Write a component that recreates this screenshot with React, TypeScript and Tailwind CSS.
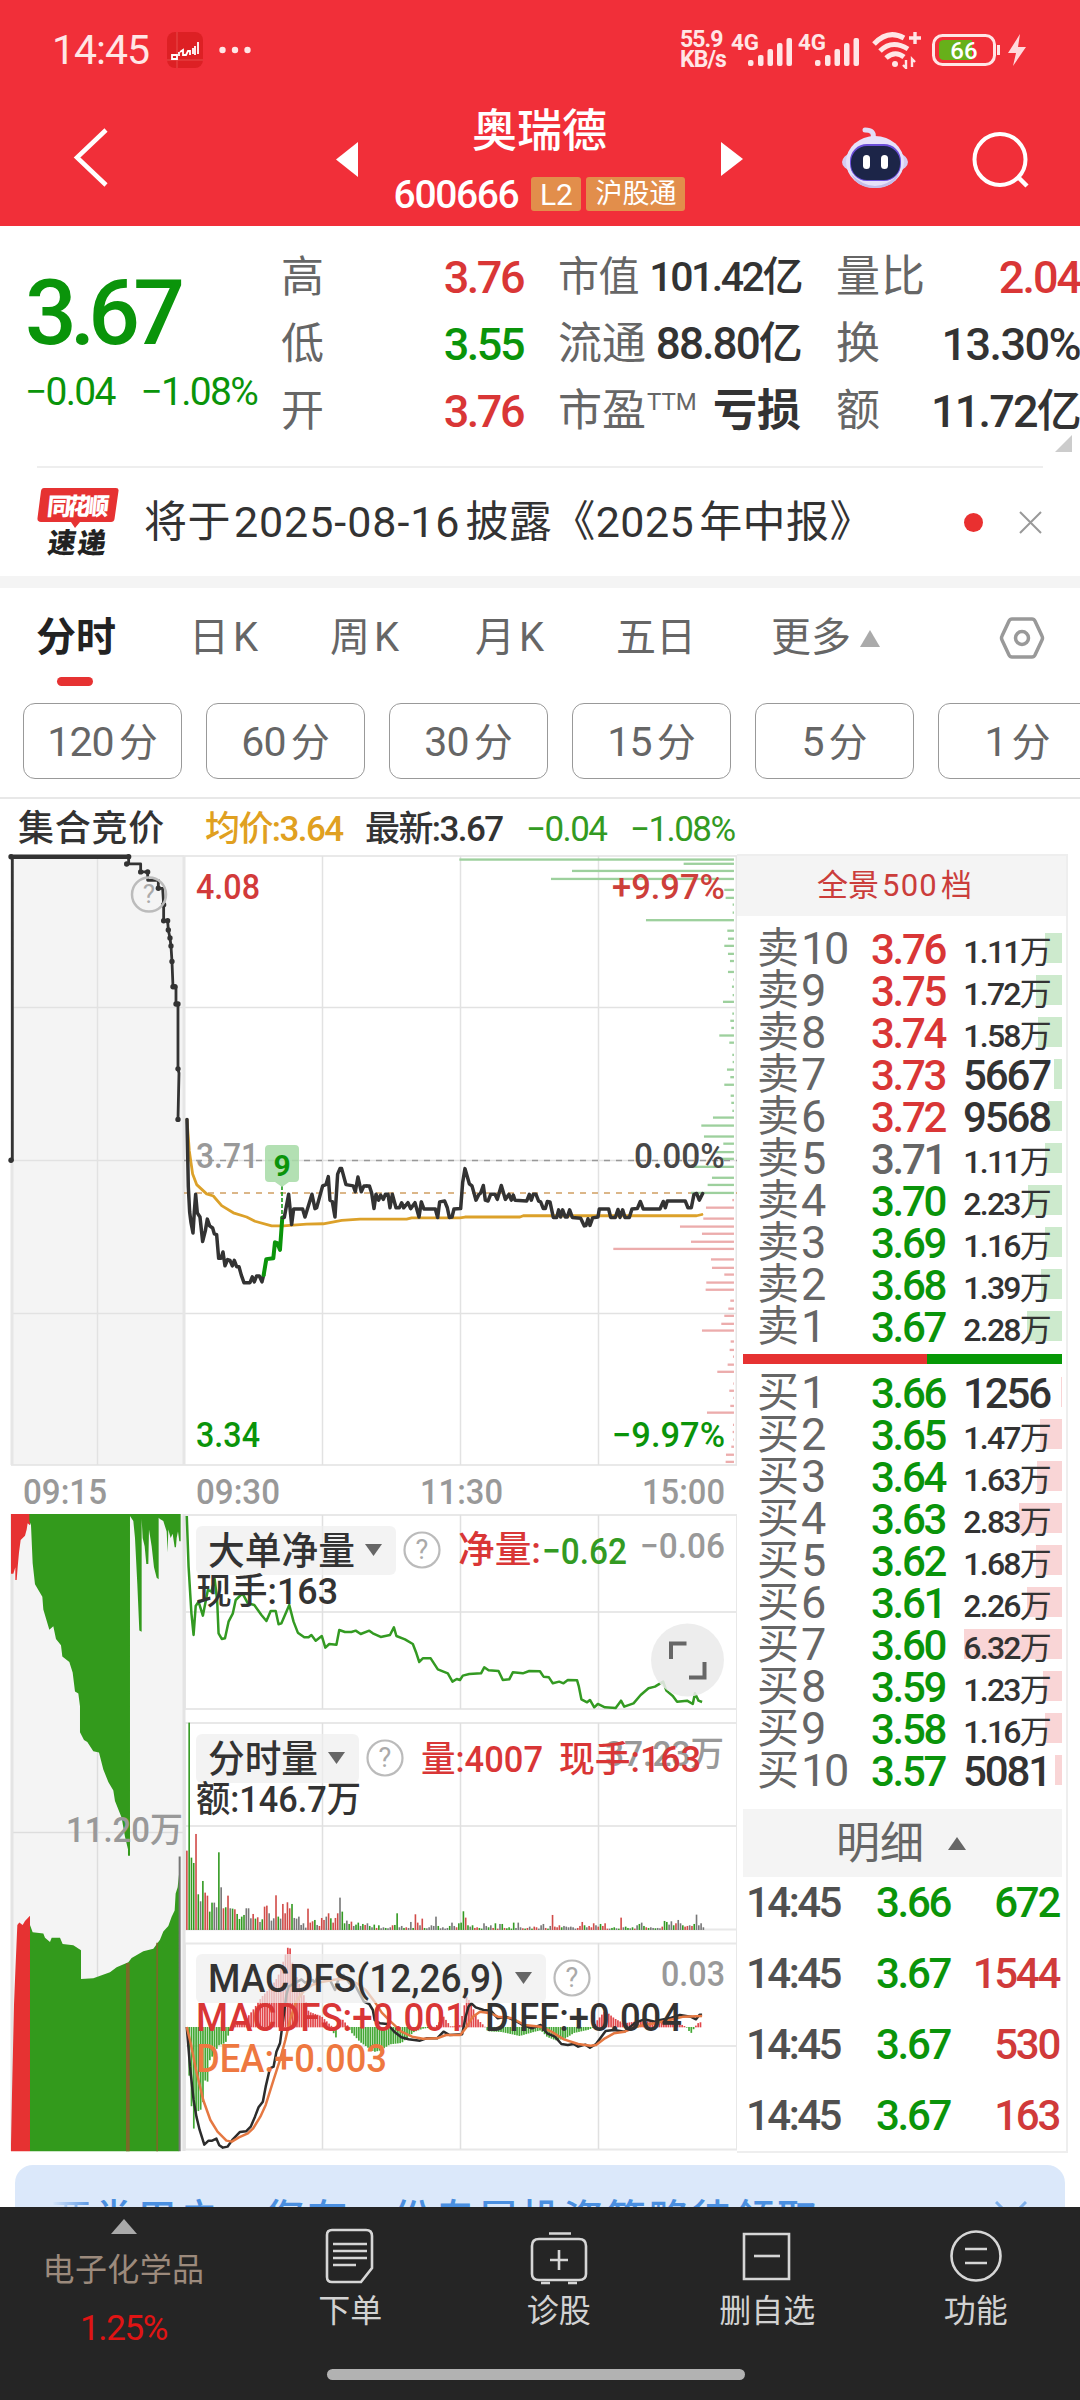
import React from 'react';

const SELL = [
  { label: '10', price: '3.76', vol: '1.11', wan: true, bar: 17, tone: 'up' },
  { label: '9', price: '3.75', vol: '1.72', wan: true, bar: 26, tone: 'up' },
  { label: '8', price: '3.74', vol: '1.58', wan: true, bar: 24, tone: 'up' },
  { label: '7', price: '3.73', vol: '5667', wan: false, bar: 8, tone: 'up' },
  { label: '6', price: '3.72', vol: '9568', wan: false, bar: 14, tone: 'up' },
  { label: '5', price: '3.71', vol: '1.11', wan: true, bar: 17, tone: 'flat' },
  { label: '4', price: '3.70', vol: '2.23', wan: true, bar: 34, tone: 'down' },
  { label: '3', price: '3.69', vol: '1.16', wan: true, bar: 17, tone: 'down' },
  { label: '2', price: '3.68', vol: '1.39', wan: true, bar: 21, tone: 'down' },
  { label: '1', price: '3.67', vol: '2.28', wan: true, bar: 35, tone: 'down' },
];

const BUY = [
  { label: '1', price: '3.66', vol: '1256', wan: false, bar: 1, tone: 'down' },
  { label: '2', price: '3.65', vol: '1.47', wan: true, bar: 22, tone: 'down' },
  { label: '3', price: '3.64', vol: '1.63', wan: true, bar: 25, tone: 'down' },
  { label: '4', price: '3.63', vol: '2.83', wan: true, bar: 43, tone: 'down' },
  { label: '5', price: '3.62', vol: '1.68', wan: true, bar: 26, tone: 'down' },
  { label: '6', price: '3.61', vol: '2.26', wan: true, bar: 35, tone: 'down' },
  { label: '7', price: '3.60', vol: '6.32', wan: true, bar: 98, tone: 'down' },
  { label: '8', price: '3.59', vol: '1.23', wan: true, bar: 19, tone: 'down' },
  { label: '9', price: '3.58', vol: '1.16', wan: true, bar: 17, tone: 'down' },
  { label: '10', price: '3.57', vol: '5081', wan: false, bar: 7, tone: 'down' },
];

const TRADES = [
  { time: '14:45', price: '3.66', vol: '672', up: false },
  { time: '14:45', price: '3.67', vol: '1544', up: true },
  { time: '14:45', price: '3.67', vol: '530', up: true },
  { time: '14:45', price: '3.67', vol: '163', up: true },
];

const TONES: Record<string, string> = {
  up: 'text-[#d93636]',
  flat: 'text-[#666]',
  down: 'text-[#0a940a]',
};

// [y, left edge], bars grow leftwards from the axis at 1122
const SELL_DEPTH = [
  [23, 298], [33, 971], [50, 636], [69, 573], [95, 1093], [114, 1097], [130, 1118], [149, 1118],
  [167, 858], [192, 1102], [211, 1104], [228, 1093], [247, 1104], [264, 1110], [290, 1104],
  [308, 1120], [325, 1116], [345, 1118], [361, 1089], [389, 1117], [406, 1111], [423, 1114],
  [441, 1078], [458, 1108], [487, 1117], [504, 1118], [522, 1101], [540, 1111], [558, 1093],
  [584, 1112], [601, 1114], [620, 1117], [636, 1059], [655, 1024], [681, 1032], [698, 1090],
  [718, 1067], [734, 1085], [753, 997], [779, 1056], [796, 1043], [815, 993],
];

const BUY_DEPTH = [
  [832, 1117], [850, 1038], [876, 1030], [895, 960], [912, 1026], [931, 993], [948, 760],
  [973, 1053], [993, 1056], [1009, 1093], [1028, 1039], [1045, 1037], [1071, 1111], [1090, 1105],
  [1107, 1093], [1126, 1084], [1142, 1026], [1168, 1112], [1188, 1109], [1204, 1119],
  [1223, 1103], [1240, 1072], [1268, 1120], [1285, 1108], [1302, 1120], [1321, 1111],
  [1337, 1041], [1366, 1119], [1383, 1118], [1401, 1120], [1418, 1114], [1437, 1098], [1454, 1097],
];

const AUCTION_LINE =
  'M33,737 L37,737 L37,16 L386,16 L386,33 L422,33 L422,52 L443,52 L443,72 L475,72 L475,91 L488,91 L491,130 L491,168 L503,168 L505,190 L510,209 L513,228 L516,265 L519,325 L528,325 L528,366 L534,366 L534,520 L537,530 L534,640';

const AUCTION_DOTS = [
  [33, 737], [33, 16], [386, 16], [380, 33], [422, 52], [443, 52], [475, 91], [491, 130],
  [491, 168], [503, 168], [505, 190], [510, 209], [513, 228], [516, 265], [519, 325], [525, 325],
  [528, 366], [534, 366], [534, 520], [534, 640],
];

const PRICE_OPEN =
  'M561,640 L565,800 L569,860 L573,885 L579,910 L583,860 L587,818 L592,862 L600,872 L608,930 L616,905 L622,877 L629,893 L638,898 L643,912 L650,914 L656,970 L663,970 L669,955 L675,988 L683,973 L690,975 L697,988 L703,975 L710,990 L717,990 L724,1010 L732,1028 L750,1028 L757,1014 L763,1026 L770,1012 L778,1012 L786,1026 L791,1010';
const PRICE_SIGNAL = 'M791,1010 L799,972 L820,970 L825,932 L832,934 L840,950 L847,873';
const PRICE_MORNING =
  'M847,873 L853,873 L866,818 L875,890 L881,853 L908,853 L915,872 L936,818 L945,852 L950,850 L968,798 L978,795 L985,776 L990,832 L997,835 L1005,872 L1013,770 L1020,757 L1025,757 L1038,795 L1060,798 L1066,812 L1074,777 L1084,812 L1092,798 L1100,798';
const PRICE_REST =
  'M20,798 L28,798 L35,815 L42,852 L48,818 L56,832 L62,820 L70,830 L76,818 L84,818 L90,850 L97,818 L108,850 L118,850 L125,838 L131,850 L144,838 L152,852 L165,838 L177,872 L184,836 L192,853 L226,853 L233,873 L239,836 L254,834 L262,850 L268,873 L276,872 L282,853 L302,852 L308,790 L315,757 L328,793 L336,798 L348,832 L357,818 L362,815 L370,797 L376,832 L384,834 L392,818 L405,818 L412,830 L424,797 L436,830 L447,818 L454,832 L460,820 L465,832 L500,834 L508,818 L514,832 L520,818 L528,818 L536,834 L542,836 L550,852 L556,852 L562,835 L570,836 L580,873 L590,873 L596,855 L602,872 L608,855 L616,872 L622,872 L629,855 L637,873 L662,875 L673,893 L678,892 L684,876 L690,892 L698,874 L714,872 L718,853 L746,853 L752,873 L766,873 L774,854 L780,873 L788,855 L795,873 L808,873 L816,853 L832,852 L841,835 L850,853 L900,853 L910,835 L916,850 L922,834 L976,834 L984,850 L994,850 L1002,818 L1010,816 L1018,832 L1028,816';
const AVERAGE_LINE =
  'M561,640 L568,715 L578,770 L590,795 L620,817 L640,822 L665,845 L700,862 L740,872 L765,882 L815,893 L850,893 L920,889 L970,888 L1025,880 L1080,877 L1220,877 L1235,874 L1380,874 L1395,872 L1560,872 L1570,869 L2090,869 L2106,866';

const NET_LINE =
  'M19,48 L24,200 L32,340 L38,405 L44,318 L52,305 L64,347 L78,270 L88,275 L97,237 L104,300 L108,400 L117,417 L126,415 L136,365 L148,340 L156,300 L175,280 L190,310 L208,315 L218,330 L228,345 L242,363 L254,333 L268,333 L276,373 L284,370 L306,315 L318,365 L330,398 L348,412 L360,412 L368,405 L380,422 L397,408 L407,443 L418,432 L438,434 L446,390 L462,396 L480,396 L492,392 L506,402 L530,392 L540,400 L562,411 L588,405 L599,382 L606,408 L630,418 L652,432 L662,460 L670,486 L680,475 L702,475 L722,508 L750,520 L763,545 L775,537 L784,540 L792,527 L810,522 L843,520 L852,502 L864,511 L892,513 L904,540 L922,538 L932,517 L960,520 L978,513 L1008,514 L1018,530 L1033,532 L1044,550 L1062,545 L1074,550 L1086,540 L1112,541 L1117,560 L1124,598 L1140,607 L1148,600 L1160,622 L1170,612 L1190,622 L1220,624 L1235,602 L1244,620 L1270,610 L1290,585 L1312,565 L1330,560 L1353,545 L1362,572 L1380,588 L1392,605 L1420,602 L1436,612 L1442,580 L1452,602 L1462,606';

const DIFF_LINE =
  'M19,321 L28,440 L38,540 L46,590 L55,630 L68,674 L80,662 L90,662 L102,656 L110,676 L120,683 L133,680 L148,658 L168,636 L185,634 L198,620 L210,590 L220,562 L232,545 L240,500 L252,445 L262,440 L270,395 L280,370 L290,290 L298,225 L304,200 L320,190 L340,178 L350,188 L362,183 L372,180 L378,190 L386,168 L398,176 L420,180 L434,210 L446,170 L458,165 L475,190 L490,195 L500,215 L515,245 L530,252 L540,270 L545,300 L560,310 L580,312 L600,335 L620,352 L640,358 L672,362 L690,355 L720,355 L738,335 L755,345 L790,343 L800,290 L808,260 L816,250 L828,262 L850,270 L870,272 L890,295 L912,290 L935,300 L955,312 L985,325 L1010,315 L1028,340 L1050,350 L1068,372 L1086,375 L1102,372 L1115,380 L1135,374 L1148,383 L1165,372 L1180,350 L1192,333 L1215,330 L1245,335 L1275,308 L1300,298 L1330,305 L1345,300 L1370,295 L1400,285 L1430,290 L1445,298 L1455,284 L1462,284';
const DEA_LINE =
  'M19,321 L30,370 L45,450 L65,540 L85,600 L105,635 L130,662 L145,665 L165,652 L190,640 L205,625 L225,590 L240,555 L262,480 L280,420 L295,360 L308,300 L325,245 L345,215 L370,195 L400,185 L440,178 L470,178 L495,190 L520,210 L545,245 L565,278 L590,305 L620,335 L650,350 L680,356 L720,355 L745,345 L785,345 L800,325 L820,290 L840,275 L870,280 L890,290 L930,295 L965,315 L1010,320 L1040,335 L1075,358 L1115,372 L1150,377 L1165,375 L1190,355 L1215,340 L1245,335 L1285,318 L1330,310 L1380,298 L1410,290 L1462,288';

// volume per minute and its colour (r up, g down, k flat)
const VOLUMES = [
  238, 622, 217, 201, 288, 107, 86, 147, 112, 103, 55, 82, 82, 68, 233, 128, 65, 68, 103, 65, 64, 62,
  48, 33, 40, 45, 65, 65, 35, 48, 34, 38, 24, 32, 70, 73, 50, 28, 35, 104, 40, 34, 78, 50, 83, 65,
  78, 36, 34, 40, 15, 20, 7, 64, 22, 26, 30, 15, 12, 36, 30, 40, 50, 35, 22, 36, 50, 97, 55, 20, 28,
  18, 25, 12, 16, 22, 12, 18, 15, 20, 12, 8, 16, 6, 14, 5, 8, 6, 5, 8, 14, 15, 50, 8, 12, 6, 8, 6, 24,
  6, 47, 22, 14, 34, 6, 5, 8, 14, 12, 40, 12, 5, 8, 4, 6, 12, 22, 12, 8, 20, 22, 56, 37, 14, 10, 14, 6,
  8, 6, 4, 20, 12, 8, 14, 6, 20, 4, 18, 18, 6, 5, 8, 4, 22, 6, 22, 8, 5, 4, 6, 10, 4, 10, 8, 4, 14, 18,
  6, 4, 12, 45, 10, 8, 14, 8, 12, 10, 8, 10, 8, 4, 6, 12, 24, 14, 8, 12, 8, 20, 14, 10, 18, 12, 20, 4,
  4, 6, 8, 5, 4, 37, 8, 10, 6, 5, 8, 4, 14, 18, 22, 12, 8, 6, 8, 6, 5, 6, 5, 10, 27, 24, 16, 26, 14, 20,
  30, 20, 14, 10, 12, 14, 12, 18, 46, 14, 20, 8,
];
const VOLUME_TONES =
  'rgggrgkgrrggkkgkrgrkgrggggkkkrgrkgrrkkkrgkrrrrgkkkkkkrrrgkrrrkrgrrrkggkgrkggkgrkgkgrgkkgkkrggkkgrkkgrrkrgkkkkkgkkkkgkk';

const TONE_FILL: Record<string, string> = { r: '#d14b48', g: '#339a22', k: '#777' };

// histogram key points: [x, y], zero line at 321
const MACD_KEYS = [
  [19, 321], [25, 460], [32, 560], [38, 627], [44, 575], [57, 570], [64, 545], [70, 480], [76, 492],
  [83, 420], [95, 400], [108, 375], [127, 368], [140, 330], [146, 318], [178, 305], [204, 270],
  [229, 230], [255, 200], [268, 180], [280, 155], [293, 110], [306, 69], [312, 120], [331, 185],
  [350, 235], [360, 275], [395, 288], [424, 318], [428, 321], [434, 377], [440, 310], [452, 295],
  [468, 315], [478, 335], [504, 365], [543, 395], [562, 390], [588, 372], [620, 368], [655, 335],
  [680, 325], [715, 320], [738, 290], [758, 320], [784, 315], [797, 250], [803, 228], [816, 255],
  [835, 300], [852, 318], [862, 333], [900, 335], [951, 347], [990, 335], [1010, 330], [1028, 350],
  [1052, 360], [1078, 355], [1103, 338], [1145, 328], [1158, 321], [1165, 305], [1190, 272],
  [1216, 295], [1242, 310], [1280, 304], [1340, 304], [1400, 312], [1418, 321], [1430, 340],
  [1440, 323], [1449, 310], [1462, 305],
];

function macdBars() {
  const bars: { x: number; y: number }[] = [];
  for (let x = 19; x <= 1462; x += 6.42) {
    const i = Math.max(1, MACD_KEYS.findIndex((k) => k[0] >= x));
    const [x0, y0] = MACD_KEYS[i - 1];
    const [x1, y1] = MACD_KEYS[i];
    bars.push({ x, y: y0 + ((y1 - y0) * (x - x0)) / (x1 - x0) });
  }
  return bars;
}

interface LabelProps {
  x: number;
  y: number;
  w: number;
  fill: string;
  children: string;
  size?: number;
  weight?: number;
}

function Label({ x, y, w, fill, children, size = 35, weight = 500 }: LabelProps) {
  return (
    <text x={x} y={y} textLength={w} lengthAdjust="spacingAndGlyphs" fontSize={size} fontWeight={weight} fill={fill}>
      {children}
    </text>
  );
}

function Help({ cx, cy }: { cx: number; cy: number }) {
  return (
    <g>
      <circle cx={cx} cy={cy} r="17.5" fill="none" stroke="#bbb" strokeWidth="2.2" />
      <text x={cx} y={cy + 9} textAnchor="middle" fontSize="27" fill="#aaa">
        ?
      </text>
    </g>
  );
}

function StatusBar() {
  return (
    <div className="flex h-[100px] items-center pl-[52px] pr-[54px] text-[#ffe6e6]">
      <span className="text-[41px] leading-none tracking-[-0.025em]">14:45</span>
      <svg className="ml-[18px]" width="36" height="36" viewBox="0 0 36 36">
        <rect width="36" height="36" rx="8" fill="#dd2024" />
        <path d="M10 0v36M0 28h36" stroke="#e84a4a" strokeWidth="1" />
        <path d="M5 27v-4h5v4zM12 20v4M13 20l3-2v5h3l2-4h2v4M26 16v6M28 14v9M31 10v12" stroke="#fff" strokeWidth="1.8" fill="none" />
      </svg>
      <svg className="ml-4" width="32" height="8" viewBox="0 0 32 8" fill="#ffe6e6">
        <circle cx="3.5" cy="4" r="3.2" />
        <circle cx="16" cy="4" r="3.2" />
        <circle cx="28.5" cy="4" r="3.2" />
      </svg>
      <div className="ml-auto flex items-center">
        <div className="w-[51px] text-[23px] font-bold leading-[20px] tracking-[-0.04em]">
          <div>55.9</div>
          <div>KB/s</div>
        </div>
        {[0, 1].map((i) => (
          <svg
            key={i}
            className={i ? 'ml-[5px] overflow-visible' : 'overflow-visible'}
            width="62"
            height="36"
            viewBox="0 0 62 36"
            fill="#ffe6e6"
          >
            <text x="0" y="18" fontSize="22" fontWeight="700" textLength="28" lengthAdjust="spacingAndGlyphs">
              4G
            </text>
            <rect x="17" y="28" width="5.5" height="6" rx="2" />
            <rect x="27" y="23" width="5.5" height="11" rx="2" />
            <rect x="36.5" y="17" width="5.5" height="17" rx="2" />
            <rect x="46" y="11" width="5.5" height="23" rx="2" />
            <rect x="55.5" y="6" width="5.5" height="28" rx="2" />
          </svg>
        ))}
        <svg className="ml-[12px]" width="50" height="38" viewBox="0 0 50 38" fill="none" stroke="#ffe6e6" strokeWidth="5">
          <path d="M2 13Q16-2 32 7" />
          <path d="M8 20q12-12 28-2" />
          <path d="M14 27q9-8 18-1" />
          <circle cx="23" cy="33" r="3" fill="#ffe6e6" stroke="none" />
          <path d="M43 1v12M37 7h12" strokeWidth="3.4" />
          <path d="M34 29v8l-3-3M40 36v-8l3 3" strokeWidth="2.4" />
        </svg>
        <svg className="ml-[10px]" width="94" height="34" viewBox="0 0 94 34">
          <rect x="1.500" y="2.500" width="61" height="29" rx="9" fill="none" stroke="#ffe6e6" strokeWidth="3" />
          <path d="M12 7h28v20H12q-5 0-5-5V12q0-5 5-5" fill="#67b01a" />
          <path d="M66.500 12v10" stroke="#ffe6e6" strokeWidth="3" />
          <text x="32" y="25.500" textAnchor="middle" fontSize="24" fontWeight="500" fill="#fff">
            66
          </text>
          <path d="M88 1L76 20h8l-3 13 13-19h-8z" fill="#ffd9dc" />
        </svg>
      </div>
    </div>
  );
}

function Header() {
  return (
    <header className="h-[226px] bg-[#f12f39] text-white">
      <StatusBar />
      <div className="flex h-[126px] items-start">
        <svg className="ml-[72px] mt-[26px]" width="40" height="64" viewBox="0 0 40 64">
          <path d="M34 4L5 31.500L34 59" fill="none" stroke="#fff" strokeWidth="4.500" />
        </svg>
        <svg className="ml-[224px] mt-[42px]" width="22" height="35" viewBox="0 0 22 35">
          <path d="M22 0v35L0 17.500z" fill="#fff" />
        </svg>
        <div className="ml-[35px] mt-[7px] flex w-[293px] flex-col items-center">
          <h1 className="text-[45px] font-medium leading-[50px]">奥瑞德</h1>
          <div className="mt-[18px] flex items-center gap-[5px]">
            <span className="mr-[8px] pt-[3px] text-[39px] font-medium leading-[34px] tracking-[-0.035em]">600666</span>
            <span className="h-[34px] w-[50px] rounded-[3px] bg-[#e28e4b] text-center text-[30px] leading-[35px]">L2</span>
            <span className="h-[34px] w-[99px] rounded-[3px] bg-[#e28e4b] text-center text-[27px] leading-[34px]">
              沪股通
            </span>
          </div>
        </div>
        <svg className="ml-[35px] mt-[42px]" width="22" height="34" viewBox="0 0 22 34">
          <path d="M0 0v34L22 17z" fill="#fff" />
        </svg>
        <svg className="ml-[98px] mt-[26px]" width="68" height="64" viewBox="0 0 68 64">
          <path d="M32 12Q34 4 24 4" fill="none" stroke="#e3dcf6" strokeWidth="5" strokeLinecap="round" />
          <ellipse cx="34" cy="36" rx="33" ry="14" fill="#d5cdf2" />
          <ellipse cx="34" cy="36" rx="29" ry="26" fill="#e6e1fa" />
          <path d="M10 48q24 24 48 0-6 14-24 14T10 48" fill="#c3bdea" />
          <rect x="9" y="18" width="51" height="37" rx="17" fill="#6b4fd8" />
          <rect x="10" y="20" width="49" height="34" rx="16" fill="#1c2548" />
          <rect x="22" y="29" width="7" height="14" rx="3.500" fill="#fff" />
          <rect x="40" y="29" width="7" height="14" rx="3.500" fill="#fff" />
        </svg>
        <svg className="ml-[63px] mt-[31px]" width="58" height="60" viewBox="0 0 58 60">
          <circle cx="28" cy="28.500" r="25.500" fill="none" stroke="#fff" strokeWidth="4" />
          <path d="M46 46l9 9" stroke="#fff" strokeWidth="4.500" />
        </svg>
      </div>
    </header>
  );
}

function Quote() {
  return (
    <section className="relative flex h-[240px] pt-[18px] text-[#333]">
      <div className="w-[281px] pl-[25px] text-[#0a940a]">
        <div className="mt-[28px] text-[91px] font-medium leading-[82px] tracking-[-0.075em]">3.67</div>
        <div className="mt-[15px] flex gap-[26px] text-[39px] leading-[46px] tracking-[-0.045em]">
          <span>−0.04</span>
          <span>−1.08%</span>
        </div>
      </div>
      <div className="w-[242px] text-[45px] font-medium leading-[67px] tracking-[-0.055em]">
        {[
          ['高', '3.76', 'text-[#d93636]'],
          ['低', '3.55', 'text-[#0a940a]'],
          ['开', '3.76', 'text-[#d93636]'],
        ].map(([name, value, tone]) => (
          <div key={name} className="flex h-[67px] justify-between">
            <span className="text-[43px] font-normal text-[#666]">{name}</span>
            <span className={tone}>{value}</span>
          </div>
        ))}
      </div>
      <div className="ml-[35px] w-[243px] text-[43px] leading-[67px]">
        <div className="flex h-[67px] justify-between">
          <span className="text-[41px] tracking-[-0.01em] text-[#666]">市值</span>
          <span className="text-[41px] font-medium tracking-[-0.06em]">101.42亿</span>
        </div>
        <div className="flex h-[67px] justify-between">
          <span className="text-[44px] text-[#666]">流通</span>
          <span className="text-[44px] font-medium tracking-[-0.042em]">88.80亿</span>
        </div>
        <div className="flex h-[67px]">
          <span className="text-[44px] text-[#666]">市盈</span>
          <span className="ml-px text-[24px] leading-[48px] text-[#666]">TTM</span>
          <span className="ml-auto text-[44px] font-bold">亏损</span>
        </div>
      </div>
      <div className="ml-[35px] w-[244px] text-[45px] font-medium leading-[67px]">
        <div className="flex h-[67px] justify-between">
          <span className="text-[44px] font-normal tracking-[0.02em] text-[#666]">量比</span>
          <span className="tracking-[-0.045em] text-[#d93636]">2.04</span>
        </div>
        <div className="flex h-[67px] justify-between">
          <span className="text-[44px] font-normal text-[#666]">换</span>
          <span className="tracking-[-0.035em]">13.30%</span>
        </div>
        <div className="flex h-[67px] justify-between">
          <span className="text-[44px] font-normal text-[#666]">额</span>
          <span className="tracking-[-0.04em]">11.72亿</span>
        </div>
      </div>
      <svg className="absolute right-2 top-[209px]" width="17" height="17" viewBox="0 0 17 17">
        <path d="M17 0v17H0z" fill="#ccc" />
      </svg>
    </section>
  );
}

function Notice() {
  return (
    <div className="mx-[37px] flex h-[110px] items-center border-t-2 border-[#eee]">
      <svg className="overflow-visible" width="82" height="68" viewBox="0 0 82 68">
        <path d="M7 0h72q3 0 2.500 3l-4 28q-.5 3-3.500 3H43l-5 6-4-6H4q-4 0-3.500-4L4 3q.5-3 3-3" fill="#e63232" />
        <text x="8" y="27" fontSize="24" fontWeight="900" fill="#fff" transform="skewX(-6) translate(4 0)" textLength="62">
          同花顺
        </text>
        <text x="10" y="65" fontSize="28" fontWeight="900" fill="#222" transform="skewX(-8) translate(9 0)" textLength="58">
          速递
        </text>
      </svg>
      <p className="ml-[25px] whitespace-nowrap text-[43px] leading-none tracking-[0.01em] text-[#333]">
        将于<span className="ml-[3px] mr-[5px] tracking-[0.022em]">2025-08-16</span>披露《
        <span className="mr-[5px]">2025</span>年中报》
      </p>
      <span className="ml-auto size-[19px] rounded-full bg-[#e93030]" />
      <svg className="ml-[36px] mr-px" width="23" height="23" viewBox="0 0 23 23">
        <path d="M1 1l21 21M22 1L1 22" stroke="#999" strokeWidth="2" />
      </svg>
    </div>
  );
}

function Periods() {
  return (
    <>
      <div className="flex h-[98px] items-center pl-[36px] pt-[2px] text-[40px] leading-none text-[#666]">
        <span className="w-[153px] font-bold text-[#222]">分时</span>
        <span className="w-[141px] tracking-[0.1em]">日K</span>
        <span className="w-[145px] tracking-[0.1em]">周K</span>
        <span className="w-[141px] tracking-[0.1em]">月K</span>
        <span className="w-[155px]">五日</span>
        <span>更多</span>
        <svg className="ml-[9px]" width="20" height="17" viewBox="0 0 20 17">
          <path d="M10 0l10 17H0z" fill="#aaa" />
        </svg>
        <svg className="ml-auto mr-[35px]" width="46" height="44" viewBox="0 0 46 44" fill="none" stroke="#999" strokeWidth="3.500">
          <path d="M13 3h20q2 0 3 2l7 15q1 2 0 4l-7 15q-1 2-3 2H13q-2 0-3-2L3 24q-1-2 0-4L10 5q1-2 3-2z" />
          <circle cx="23" cy="22" r="6.500" />
        </svg>
      </div>
      <div className="ml-[57px] mt-[-9px] h-[9px] w-[36px] rounded-full bg-[#e63232]" />
      <div className="mt-[17px] flex gap-[24px] overflow-hidden pl-[23px]">
        {['120', '60', '30', '15', '5', '1'].map((n) => (
          <button
            key={n}
            className="h-[76px] w-[159px] shrink-0 rounded-xl border-[1.5px] border-[#999] pt-[2px] text-[39px] leading-none text-[#666]"
          >
            <span className="mr-[5px] text-[41px] tracking-[-0.02em]">{n}</span>分
          </button>
        ))}
      </div>
      <div className="mt-[18px] h-[2px] bg-[#e8e8e8]" />
      <div className="flex h-[55px] items-center whitespace-nowrap pl-[18px] pt-[5px] text-[35px] font-medium leading-none tracking-[-0.045em] text-[#333]">
        <span className="w-[187px] text-[36px] tracking-[0.02em]">集合竞价</span>
        <span className="w-[160px] text-[#e0a020]">均价:3.64</span>
        <span className="w-[161px]">最新:3.67</span>
        <span className="w-[104px] font-normal text-[#339a22]">−0.04</span>
        <span className="font-normal text-[#339a22]">−1.08%</span>
      </div>
    </>
  );
}

function PriceChart() {
  return (
    <svg width="737" height="656" viewBox="0 854 737 656">
      <rect x="11" y="855" width="173" height="610" fill="#f4f4f4" />
      <path
        d="M11 856H737M11 1007.500H737M11 1160.500H737M11 1313.500H737M11 1465H737M97.500 856V1465M322.500 856V1465M460.500 856V1465M598.500 856V1465"
        stroke="#e2e2e2"
        strokeWidth="1.500"
      />
      <path d="M12 856V1465M184 856V1465M737 856V1465" stroke="#e6e6e6" strokeWidth="3" />
      <path d="M184 1160.500H737" stroke="#999" strokeWidth="1.500" strokeDasharray="6 6" />
      <path d="M184 1193H737" stroke="#cf9f62" strokeWidth="1.500" strokeDasharray="6 6" />
      <g transform="translate(360 850) scale(.3333 .4209)">
        {SELL_DEPTH.map(([y, x]) => (
          <rect key={y} x={x} y={y - 3} width={1122 - x} height="5.5" fill="#9dd09d" />
        ))}
        {BUY_DEPTH.map(([y, x]) => (
          <rect key={y} x={x} y={y - 3} width={1122 - x} height="5.5" fill="#ecacac" />
        ))}
      </g>
      <Label x={196} y={1168} w={63} fill="#999">3.71</Label>
      <g fill="none" strokeLinejoin="round" strokeLinecap="round">
        <g transform="translate(0 850) scale(.3333 .4209)">
          <path d={AUCTION_LINE} stroke="#333" strokeWidth="2.800" vectorEffect="non-scaling-stroke" />
          {AUCTION_DOTS.map(([x, y], i) => (
            <ellipse key={i} cx={x} cy={y} rx="8" ry="6.500" fill="#333" />
          ))}
          <path d="M37,16 H386" stroke="#333" strokeWidth="4.500" vectorEffect="non-scaling-stroke" />
          <path d={AVERAGE_LINE} stroke="#dca12a" strokeWidth="2.800" vectorEffect="non-scaling-stroke" />
          <path d={PRICE_OPEN} stroke="#333" strokeWidth="3.500" vectorEffect="non-scaling-stroke" />
          <path d={PRICE_SIGNAL} stroke="#0a940a" strokeWidth="4" vectorEffect="non-scaling-stroke" />
          <path d={PRICE_MORNING} stroke="#333" strokeWidth="3.500" vectorEffect="non-scaling-stroke" />
        </g>
        <g transform="translate(360 850) scale(.3333 .4209)">
          <path d={PRICE_REST} stroke="#333" strokeWidth="3.500" vectorEffect="non-scaling-stroke" />
        </g>
      </g>
      <circle cx="149" cy="894.500" r="17" fill="none" stroke="#bbb" strokeWidth="2.500" />
      <text x="149" y="903" textAnchor="middle" fontSize="26" fill="#aaa">
        ?
      </text>
      <path d="M282 1186V1218" stroke="#0a940a" strokeWidth="1.500" strokeDasharray="4 2" />
      <path d="M269 1145h26q4 0 4 4v29q0 4-4 4h-6l-7 5-7-5h-6q-4 0-4-4v-29q0-4 4-4" fill="#a8dca8" fillOpacity=".88" />
      <text x="282" y="1176" textAnchor="middle" fontSize="30" fontWeight="700" fill="#0a940a">
        9
      </text>
      <Label x={196} y={899} w={64} fill="#d23a3a">4.08</Label>
      <Label x={612} y={899} w={113} fill="#cd3e3a">+9.97%</Label>
      <Label x={634} y={1168} w={91} fill="#484848">0.00%</Label>
      <Label x={196} y={1447} w={64} fill="#0a940a">3.34</Label>
      <Label x={612} y={1447} w={113} fill="#0a940a">−9.97%</Label>
      <Label x={23} y={1504} w={84} fill="#999">09:15</Label>
      <Label x={196} y={1504} w={84} fill="#999">09:30</Label>
      <Label x={420} y={1504} w={83} fill="#999">11:30</Label>
      <Label x={642} y={1504} w={83} fill="#999">15:00</Label>
    </svg>
  );
}

function AuctionVolume() {
  return (
    <g>
      <rect x="11" y="1514" width="173" height="637" fill="#f4f4f4" />
      <path d="M97.500 1514V2151M11 1832.500H184" stroke="#ddd" strokeWidth="1.500" />
      <path d="M12 1514V2151M184 1514V2151" stroke="#e4e4e4" strokeWidth="3" />
      <g transform="translate(0 1500) scale(.3333 .4209)">
        <path d="M33,33 L90,33 L90,60 L83,55 L80,70 L75,85 L62,95 L57,125 L53,160 L50,190 L46,190 V160 L40,175 L33,175Z" fill="#e63232" />
        <path
          d="M88,33 H390 V845 H384 V830 L375,800 L365,755 L345,715 L340,690 L325,670 L310,640 L297,600 L280,597 L262,575 L252,570 L240,552 L240,490 L235,460 L225,455 L218,410 L208,385 L187,372 L183,345 L168,330 L160,300 L148,308 L130,260 L127,230 L105,200 L98,150 L93,60 L88,50Z"
          fill="#339a1c"
        />
        <path
          d="M390,33 H542 V98 H538 L534,75 L530,90 L528,112 L524,112 L518,80 L512,90 L505,70 L503,125 L500,75 L490,50 L480,45 L476,42 V188 L470,185 L462,160 L455,110 L447,70 L445,152 L439,152 L434,110 L428,90 L425,45 V313 L418,310 L412,200 L405,90 L400,50 L390,38Z"
          fill="#339a1c"
        />
        <path d="M33,1547 V1530 L36,1410 L42,1200 L46,1120 L52,1010 L58,1004 L68,1010 L75,1000 L90,988 V1547Z" fill="#e63232" />
        <path
          d="M90,1547 V1010 L98,1027 L130,1030 L135,1040 L150,1050 L155,1040 L180,1040 L188,1055 L220,1058 L243,1070 V1138 L280,1136 L330,1122 L350,1110 L385,1098 L395,1088 L430,1072 L460,1066 L480,1045 L490,1025 L505,1012 L515,990 L524,975 L527,935 L533,920 L537,890 V1547Z"
          fill="#339a1c"
        />
        <path d="M378,1100 H389 V1547 H378Z M469,1052 H474 V1547 H469Z" fill="#7a6a28" />
        <path d="M536,847 H542 V1547 H536Z" fill="#777" />
      </g>
      <Label x={66} y={1842} w={117} fill="#999">11.20万</Label>
    </g>
  );
}

function Chip({ x, y, w, text, tw }: { x: number; y: number; w: number; text: string; tw: number }) {
  return (
    <g>
      <rect x={x} y={y} width={w} height="49" rx="6" fill="#eee" fillOpacity=".7" />
      <Label x={208} y={y + 38} w={tw} fill="#333" size={38}>
        {text}
      </Label>
      <path d={`M${x + w - 31} ${y + 18}h17l-8.500 12z`} fill="#666" />
      <Help cx={x + w + 26} cy={y + 24} />
    </g>
  );
}

function Indicators() {
  return (
    <svg width="737" height="650" viewBox="0 1510 737 650">
      <path
        d="M184 1515H737M184 1612H737M184 1709H737M184 1723H737M184 1826H737M184 1929.500H737M184 1943.500H737M184 2046H737M184 2149.500H737"
        stroke="#e8e8e8"
        strokeWidth="2"
      />
      <path
        d="M322.500 1515V1709M460.500 1515V1709M598.500 1515V1709M322.500 1723V1929M460.500 1723V1929M598.500 1723V1929M322.500 1943V2149M460.500 1943V2149M598.500 1943V2149"
        stroke="#e0e0e0"
        strokeWidth="1.500"
      />
      <path d="M185 1515V1709M185 1723V1929M185 1943V2149M737 1515V2149" stroke="#e8e8e8" strokeWidth="2" />
      <AuctionVolume />

      <g transform="translate(180 1500) scale(.3571 .3333)">
        <path d={NET_LINE} fill="none" stroke="#339a22" strokeWidth="2.500" strokeLinejoin="round" vectorEffect="non-scaling-stroke" />
        {VOLUMES.map((v, i) => (
          <rect
            key={i}
            x={17 + i * 6.4}
            y={1290 - v}
            width="4.5"
            height={v}
            fill={TONE_FILL[VOLUME_TONES[i % VOLUME_TONES.length]]}
          />
        ))}
      </g>
      <g transform="translate(180 1920) scale(.3571 .3333)">
        {macdBars().map(({ x, y }) => (
          <rect
            key={x}
            x={x - 2}
            y={Math.min(321, y)}
            width="4.8"
            height={Math.abs(y - 321) + 1}
            fill={y < 321 ? '#e2474b' : '#44a836'}
          />
        ))}
        <path d={DIFF_LINE} fill="none" stroke="#2c2c2c" strokeWidth="2.500" strokeLinejoin="round" vectorEffect="non-scaling-stroke" />
        <path d={DEA_LINE} fill="none" stroke="#e57842" strokeWidth="2.500" strokeLinejoin="round" vectorEffect="non-scaling-stroke" />
      </g>

      <Chip x={196} y={1526} w={200} text="大单净量" tw={147} />
      <Label x={458} y={1563} w={83} fill="#d93636" size={37}>净量:</Label>
      <Label x={542} y={1564} w={85} fill="#339a22" size={37}>−0.62</Label>
      <Label x={640} y={1558} w={85} fill="#999">−0.06</Label>
      <Label x={196} y={1604} w={142} fill="#333" size={36}>现手:163</Label>
      <circle cx="687.500" cy="1660" r="36.500" fill="#eaeaea" fillOpacity=".88" />
      <path d="M671 1659V1643.500H686.500M689 1677.500H704.500V1662" fill="none" stroke="#666" strokeWidth="4" />

      <Label x={605} y={1766} w={119} fill="#999">37.23万</Label>
      <Chip x={196} y={1734} w={163} text="分时量" tw={110} />
      <Label x={421} y={1772} w={122} fill="#d93636" size={36}>量:4007</Label>
      <Label x={559} y={1772} w={142} fill="#d93636" size={36}>现手:163</Label>
      <Label x={196} y={1812} w={165} fill="#333" size={36}>额:146.7万</Label>

      <Chip x={196} y={1954} w={350} text="MACDFS(12,26,9)" tw={296} />
      <Label x={661} y={1986} w={64} fill="#999">0.03</Label>
      <Label x={196} y={2031} w={270} fill="#d93636" size={38}>MACDFS:+0.001</Label>
      <Label x={485} y={2031} w={197} fill="#333" size={38}>DIFF:+0.004</Label>
      <Label x={196} y={2072} w={191} fill="#ee7840" size={38}>DEA:+0.003</Label>
    </svg>
  );
}

function DepthRows({ side, rows, barTone }: { side: string; rows: typeof SELL; barTone: string }) {
  return (
    <div>
      {rows.map((row) => (
        <div key={row.label} className="relative flex h-[42px] items-center text-[42px] font-medium leading-[42px]">
          <div className={`absolute right-[4px] top-[5px] h-[30px] ${barTone}`} style={{ width: row.bar }} />
          <div className="relative flex w-[114px] items-center font-normal text-[#666]">
            <span className="w-[44px] text-[42px]">{side}</span>
            <span className="text-[45px] tracking-[-0.05em]">{row.label}</span>
          </div>
          <span className={`relative pt-px tracking-[-0.055em] ${TONES[row.tone]}`}>{row.price}</span>
          {row.wan ? (
            <span className="relative ml-auto mr-[16px] mt-[6px] text-[32px] font-medium leading-[35px] tracking-[-0.055em] text-[#333]">
              {row.vol}
              <span className="text-[32px] font-normal">万</span>
            </span>
          ) : (
            <span className="relative ml-auto mr-[16px] pt-px tracking-[-0.05em] text-[#333]">{row.vol}</span>
          )}
        </div>
      ))}
    </div>
  );
}

function OrderBook() {
  return (
    <aside className="h-[1299px] w-[331px] border-2 border-l-0 border-[#eee] text-[#333]">
      <div className="h-[60px] bg-[#f4f4f4] pr-[14px] text-center text-[31px] leading-[60px] text-[#cb3d3b]">
        全景<span className="mx-[3px] tracking-[0.04em]">500</span>档
      </div>
      <div className="mt-[12px] pl-[20px]">
        <DepthRows side="卖" rows={SELL} barTone="bg-[#cdeacd]" />
      </div>
      <div className="ml-[6px] mr-[4px] mt-[6px] flex h-[10px]">
        <div className="w-[184px] bg-[#e63232]" />
        <div className="flex-1 bg-[#069806]" />
      </div>
      <div className="mt-[8px] pl-[20px]">
        <DepthRows side="买" rows={BUY} barTone="bg-[#f9d5d6]" />
      </div>
      <div className="ml-[6px] mr-[4px] mt-[17px] flex h-[68px] items-center bg-[#f4f4f4] pl-[93px] text-[44px] leading-none text-[#666]">
        <span className="pt-[2px]">明细</span>
        <svg className="ml-[24px]" width="18" height="13" viewBox="0 0 18 13">
          <path d="M9 0l9 13H0z" fill="#666" />
        </svg>
      </div>
      <div className="mt-[-10px]">
        {TRADES.map((trade, i) => (
          <div
            key={i}
            className="flex h-[71px] items-center pl-[9px] pr-[7px] pt-px text-[42px] font-medium leading-none tracking-[-0.055em]"
          >
            <span className="w-[130px] tracking-[-0.06em] text-[#505050]">{trade.time}</span>
            <span className="text-[#0a940a]">{trade.price}</span>
            <span className={`ml-auto ${trade.up ? 'text-[#d03a3a]' : 'text-[#0a940a]'}`}>{trade.vol}</span>
          </div>
        ))}
      </div>
    </aside>
  );
}

function Banner() {
  return (
    <div className="mx-[15px] mt-[5px] h-[42px] shrink-0 overflow-hidden rounded-t-[18px] bg-[#dbe8fa]">
      <div className="flex pl-[36px] pt-[31px] text-[#4a8fe0]">
        <span className="bg-gradient-to-r from-[#dbe8fa] to-[#4a8fe0] bg-clip-text text-[40px] leading-[48px] tracking-[2.7px] text-transparent">
          两
        </span>
        <span className="whitespace-nowrap text-[40px] font-medium leading-[48px] tracking-[2.7px]">
          类用户，您有一份专属投资策略待领取
        </span>
        <svg className="ml-auto mr-[38px] mt-[5px]" width="32" height="32" viewBox="0 0 32 32">
          <path d="M1 1l30 30M31 1L1 31" stroke="#7fb0ea" strokeWidth="3" />
        </svg>
      </div>
    </div>
  );
}

const ICONS = [
  {
    name: '下单',
    icon: (
      <>
        <path d="M7 3h34q6 0 6 6v32L36 55H7q-5 0-5-5V8q0-5 5-5z" />
        <path d="M8 17h34M8 24h34M8 31h34M8 38h23" />
      </>
    ),
  },
  {
    name: '诊股',
    icon: (
      <>
        <path d="M15 6.500h22M5 12h40q7 0 7 7v28q0 6-7 6H5q-7 0-7-6V19q0-7 7-7zM7 56h9M34 56h9" />
        <path d="M16 33h18M25 23v20" />
      </>
    ),
  },
  {
    name: '删自选',
    icon: (
      <>
        <path d="M2 7h45v45H2z" />
        <path d="M12 29h26" />
      </>
    ),
  },
  {
    name: '功能',
    icon: (
      <>
        <circle cx="25" cy="29" r="24.500" />
        <path d="M14 22h22M14 36h22" />
      </>
    ),
  },
];

function BottomNav() {
  return (
    <nav className="h-[193px] bg-[#252525]">
      <div className="flex h-[162px] pl-[20px]">
        <div className="flex w-[208px] flex-col items-center">
          <svg className="mt-[12px]" width="26" height="15" viewBox="0 0 26 15">
            <path d="M13 0l13 15H0z" fill="#aaa" />
          </svg>
          <span className="mt-[18px] whitespace-nowrap text-[32px] leading-[36px] tracking-[0.4px] text-[#9c8a7c]">
            电子化学品
          </span>
          <span className="mt-[20px] text-[35px] leading-[42px] tracking-[-0.04em] text-[#e01414]">1.25%</span>
        </div>
        <div className="ml-[19px] flex">
          {ICONS.map(({ name, icon }) => (
            <div key={name} className="flex w-[208.5px] flex-col items-center">
              <svg
                className="mt-[20px] overflow-visible"
                width="50"
                height="58"
                viewBox="0 0 50 58"
                fill="none"
                stroke="#d6d6d6"
                strokeWidth="2.600"
              >
                {icon}
              </svg>
              <span className="mt-[6px] text-[32px] leading-[40px] text-[#d2d2d2]">{name}</span>
            </div>
          ))}
        </div>
      </div>
      <div className="ml-[327px] h-[11px] w-[418px] rounded-full bg-[#b2b2b2]" />
    </nav>
  );
}

export default function App() {
  return (
    <div className="h-[2400px] w-[1080px] overflow-hidden bg-white font-['Roboto','Noto_Sans_CJK_SC',sans-serif]">
      <Header />
      <Quote />
      <Notice />
      <div className="h-[12px] bg-[#f4f4f4]" />
      <Periods />
      <div className="flex h-[1306px]">
        <div className="w-[737px]">
          <PriceChart />
          <Indicators />
        </div>
        <OrderBook />
      </div>
      <Banner />
      <BottomNav />
    </div>
  );
}
